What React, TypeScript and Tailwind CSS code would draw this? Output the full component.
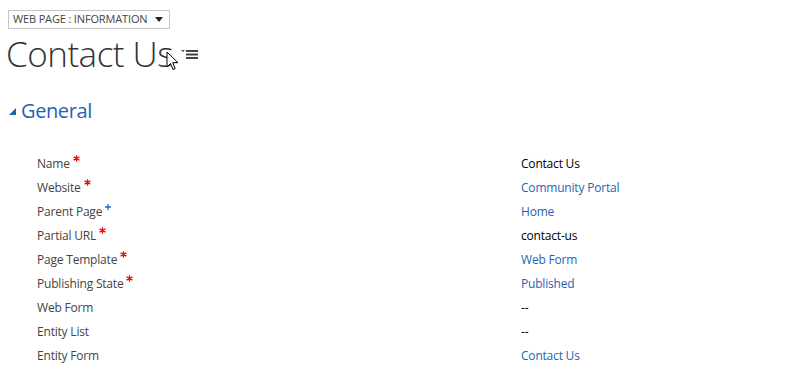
import React from 'react';

const ROWS = [
  { label: 'Name', req: 'star', value: 'Contact Us', link: false },
  { label: 'Website', req: 'star', value: 'Community Portal', link: true },
  { label: 'Parent Page', req: 'plus', value: 'Home', link: true },
  { label: 'Partial URL', req: 'star', value: 'contact-us', link: false },
  { label: 'Page Template', req: 'star', value: 'Web Form', link: true },
  { label: 'Publishing State', req: 'star', value: 'Published', link: true },
  { label: 'Web Form', req: '', value: '--', link: false },
  { label: 'Entity List', req: '', value: '--', link: false },
  { label: 'Entity Form', req: '', value: 'Contact Us', link: true },
];

const App = () => {
  return (
    <div className="w-[787px] h-[390px] bg-white overflow-hidden font-['Open_Sans',sans-serif] text-[#444]">
      {/* Header */}
      <div className="pl-[8px] pt-[10px]">
        <div className="flex w-fit items-center h-[19px] border border-[#c6c6c6] pl-[4px] pr-[6px] text-[11px] text-[#444] tracking-[-0.15px]">
          <span>WEB PAGE : INFORMATION</span>
          <svg width="8" height="5" viewBox="0 0 8 5" className="ml-[8px]">
            <path d="M0 0h8L4 5z" fill="#222" />
          </svg>
        </div>
        <div className="flex items-start h-[44px] mt-[5px]">
          <h1 className="text-[35px] leading-[40px] font-light tracking-[-0.5px] text-[#333] -ml-[2px]">Contact Us</h1>
          <div className="relative w-[40px] h-[40px]">
            <svg width="13" height="20" viewBox="0 0 13 20" className="absolute left-[-7px] top-[17px]">
              <path d="M1 1v15l3.5-3.5 2.5 6 2.2-1-2.5-5.8H12z" fill="#fff" stroke="#000" strokeWidth="1" strokeLinejoin="round" />
            </svg>
            <svg width="17" height="10" viewBox="0 0 17 10" className="absolute left-[8px] top-[15px]">
              <path d="M0 1h4L2 3z" fill="#444" />
              <rect x="5" y="1" width="12" height="2" fill="#444" />
              <rect x="5" y="4.5" width="12" height="2" fill="#444" />
              <rect x="5" y="8" width="12" height="2" fill="#444" />
            </svg>
          </div>
        </div>
      </div>

      {/* General section */}
      <div className="flex items-center pl-[9px] mt-[19px] h-[26px]">
        <svg width="7" height="7" viewBox="0 0 7 7" className="mt-[2px]">
          <path d="M7 0v7H0z" fill="#1f63b4" />
        </svg>
        <span className="ml-[5px] text-[20px] text-[#1f63b4] tracking-[-0.4px] mt-[1px]">General</span>
      </div>

      <div className="pl-[37px] mt-[29px] grid grid-cols-[484px_1fr] text-[12px]">
        {ROWS.map(row => (
          <React.Fragment key={row.label}>
            <div className="h-[24px] flex items-center text-[#444] tracking-[-0.2px]">
              <span>{row.label}</span>
              {row.req === 'star' && (
                <svg width="7" height="7" viewBox="0 0 7 7" className="ml-[3px] -mt-[11px]">
                  <path d="M3.5 0.3v6.4M0.6 1.9l5.8 3.2M0.6 5.1l5.8-3.2" stroke="#f00" strokeWidth="1.3" />
                </svg>
              )}
              {row.req === 'plus' && (
                <svg width="6" height="6" viewBox="0 0 6 6" className="ml-[3px] -mt-[11px]">
                  <path d="M3 0v6M0 3h6" stroke="#2a62c9" strokeWidth="1.3" />
                </svg>
              )}
            </div>
            <div className={`h-[24px] flex items-center tracking-[-0.2px] ${row.link ? 'text-[#1f63b4]' : 'text-black'}`}>
              {row.value}
            </div>
          </React.Fragment>
        ))}
      </div>
    </div>
  );
};

export default App;
